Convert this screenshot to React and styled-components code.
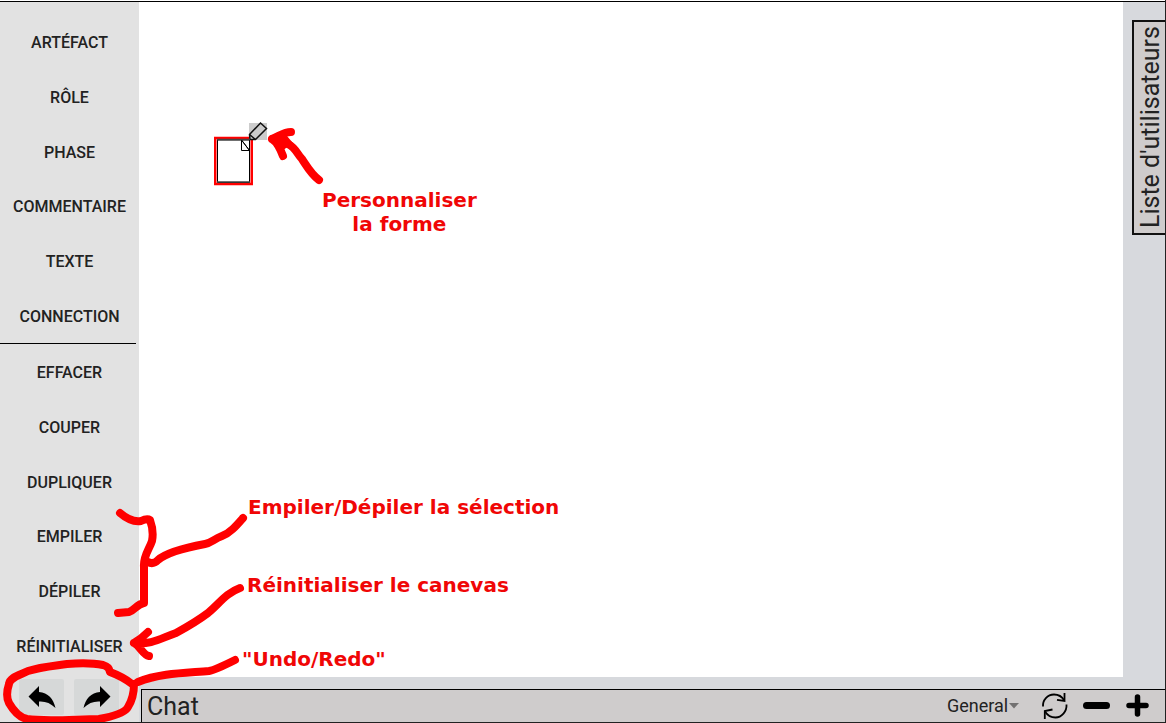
import React from "react";
import styled, { createGlobalStyle } from "styled-components";

const GlobalStyle = createGlobalStyle`
  *, *::before { box-sizing: border-box; }
  body { margin: 0; background: #fff; font-family: Roboto, sans-serif; color: #222; }
  button, select { font: inherit; color: inherit; border: 0; padding: 0; margin: 0; background: none; cursor: pointer; }
`;

const Screen = styled.div`
  position: relative;
  display: flex;
  min-height: 100vh;
  background: #d7d9dd;
  border: solid #222;
  border-width: 0 1px 1px 0;
  overflow: hidden;
  &::before {
    content: "";
    position: absolute;
    inset: 0 0 auto;
    height: 2px;
    background: #fff;
    border-bottom: 1px solid #000;
  }
`;

const Sidebar = styled.nav`
  flex: 0 0 139px;
  display: flex;
  flex-direction: column;
  padding-top: 15px;
  background: #e2e2e2;
`;

const ToolGroup = styled.div`
  flex: 1;
  display: flex;
  flex-direction: column;
`;

const ToolButton = styled.button`
  flex: 1;
  padding-top: 2px;
  font-size: 16px;
  font-weight: 500;
  line-height: 20px;
  text-transform: uppercase;
`;

const Separator = styled.hr`
  width: 136px;
  height: 1px;
  margin: 0 0 1px;
  border: 0;
  background: #000;
`;

const History = styled.div`
  display: flex;
  gap: 10px;
  padding: 6px 0 7px 19px;
`;

const HistoryButton = styled.button`
  display: grid;
  place-items: center;
  width: 45px;
  height: 36px;
  border-radius: 2px;
  background: #d6d8d8;
`;

const Main = styled.main`
  flex: 1;
  min-width: 0;
  display: flex;
  flex-direction: column;
`;

const Workspace = styled.div`
  flex: 1;
  display: flex;
  justify-content: space-between;
  padding-bottom: 12px;
`;

const Canvas = styled.section`
  flex: 1;
  background: #fff;
`;

const UserRail = styled.aside`
  flex: 0 0 42px;
  display: flex;
  justify-content: flex-end;
  align-items: flex-start;
  padding-top: 20px;
`;

const UserTab = styled.button`
  width: 33px;
  height: 215px;
  padding-right: 2px;
  border: 2px solid #111;
  border-left-width: 0;
  background: #cfcccc;
  font-size: 25px;
  line-height: 29px;
  writing-mode: vertical-rl;
  transform: rotate(180deg);
  white-space: nowrap;
`;

const ChatBar = styled.footer`
  display: flex;
  align-items: center;
  height: 33px;
  margin-left: 2px;
  padding: 0 14px 0 5px;
  border: solid #000;
  border-width: 1px 0 0 1px;
  background: #cfcccc;
`;

const ChatTitle = styled.h1`
  flex: 1;
  margin: 0;
  font-size: 25px;
  font-weight: 400;
  line-height: 32px;
  padding-top: 2px;
`;

const Channel = styled.div`
  display: flex;
  align-items: center;
  margin-right: 22px;
`;

const ChannelSelect = styled.select`
  appearance: none;
  width: 62px;
  font-size: 18px;
  line-height: 24px;
  outline: none;
`;

const ChatActions = styled.div`
  display: flex;
  align-items: center;
  gap: 14px;
`;

const IconButton = styled.button`
  display: grid;
  place-items: center;
  height: 30px;
`;

const Shape = styled.svg`
  position: absolute;
  left: 212px;
  top: 120px;
`;

const Marks = styled.svg`
  position: absolute;
  left: 0;
  top: 0;
  pointer-events: none;
  fill: none;
  stroke: #f00;
  stroke-width: 8;
  stroke-linecap: round;
  stroke-linejoin: round;
`;

const Note = styled.p`
  position: absolute;
  left: ${(p) => p.$x}px;
  top: ${(p) => p.$y}px;
  margin: 0;
  color: #f00606;
  font: bold 20px/24px "DejaVu Sans", sans-serif;
  text-align: center;
  white-space: pre-line;
`;

const shapeTools = ["Artéfact", "Rôle", "Phase", "Commentaire", "Texte", "Connection"];
const editTools = ["Effacer", "Couper", "Dupliquer", "Empiler", "Dépiler", "Réinitialiser"];

const notes = [
  { x: 322, y: 188, text: "Personnaliser\nla forme" },
  { x: 248, y: 495, text: "Empiler/Dépiler la sélection" },
  { x: 247, y: 573, text: "Réinitialiser le canevas" },
  { x: 242, y: 647, text: '"Undo/Redo"' },
];

const UndoIcon = ({ flip }) => (
  <svg width="28" height="24" viewBox="0 0 28 24" aria-hidden="true">
    <path
      transform={flip ? "translate(28 0) scale(-1 1)" : undefined}
      d="M0.500 11.500 11 1V7C20 7.500 25.500 14 27.500 23 22.500 18 17 16 11 16.500V22Z"
    />
  </svg>
);

export default function App() {
  return (
    <>
      <GlobalStyle />
      <Screen>
        <Sidebar aria-label="Outils">
          <ToolGroup>
            {shapeTools.map((name) => <ToolButton key={name}>{name}</ToolButton>)}
          </ToolGroup>
          <Separator />
          <ToolGroup>
            {editTools.map((name) => <ToolButton key={name}>{name}</ToolButton>)}
          </ToolGroup>
          <History>
            <HistoryButton aria-label="Undo"><UndoIcon /></HistoryButton>
            <HistoryButton aria-label="Redo"><UndoIcon flip /></HistoryButton>
          </History>
        </Sidebar>
        <Main>
          <Workspace>
            <Canvas aria-label="Canevas" />
            <UserRail>
              <UserTab>Liste d'utilisateurs</UserTab>
            </UserRail>
          </Workspace>
          <ChatBar>
            <ChatTitle>Chat</ChatTitle>
            <Channel>
              <ChannelSelect aria-label="Canal" defaultValue="General">
                <option>General</option>
              </ChannelSelect>
              <svg width="10" height="6" viewBox="0 0 10 6" aria-hidden="true">
                <path d="M0 0H10L5 5.500Z" fill="#737171" />
              </svg>
            </Channel>
            <ChatActions>
              <IconButton aria-label="Actualiser">
                <svg width="28" height="28" viewBox="0 0 28 28" fill="none" stroke="#000" strokeWidth="1.800" aria-hidden="true">
                  <path d="M2 14.500C1.500 8 6.500 2.500 13 2.500C17.500 2.500 21 4.500 23.200 8.500" />
                  <path d="M23.500 1V9L16 7.800" />
                  <path d="M25.500 12.500C26 19.500 20.500 25.500 14.500 25.500C10 25.500 6.500 23.500 4 19.500" />
                  <path d="M3.800 27V19L11.500 17.500" />
                </svg>
              </IconButton>
              <IconButton aria-label="Réduire">
                <svg width="27" height="24" viewBox="0 0 27 24" aria-hidden="true">
                  <rect y="8" width="27" height="7" rx="3.500" />
                </svg>
              </IconButton>
              <IconButton aria-label="Agrandir">
                <svg width="27" height="24" viewBox="0 0 27 24" aria-hidden="true">
                  <path d="M5 11.500H22M13.500 3V20" fill="none" stroke="#000" strokeWidth="5.500" strokeLinecap="round" />
                </svg>
              </IconButton>
            </ChatActions>
          </ChatBar>
        </Main>

        <Shape width="58" height="68" viewBox="0 0 58 68" fill="none" aria-hidden="true">
          <rect x="3.250" y="18" width="36.500" height="46" stroke="#f00" strokeWidth="2.500" />
          <path d="M5.500 20H30L37.500 31V62.500H5.500Z" fill="#fff" stroke="none" />
          <path d="M5.500 20H37.500V62.500H5.500ZM29.500 20V30.500H37.500Z" stroke="#000" fill="#fff" />
          <path d="M29.500 20 37.500 30.500" stroke="#000" />
          <path d="M5 19.500H38M5 62H38" stroke="#444" strokeWidth="1.500" />
          <rect x="37" y="3" width="18" height="17" fill="#ccc" />
          <path d="M37.500 14.500 48.500 3 54.500 8.500 43.500 19.500H38ZM37.500 14.500 43.500 19.500" stroke="#111" strokeWidth="1.500" />
        </Shape>
        <Marks width="600" height="723" viewBox="0 0 600 723" aria-hidden="true">
          <path d="M319 180C311 174 308 168 302 159C297 154 296 148 288 144C282 140 278 139 272 139M291 132C284 132 281 135 272 139M272 139C277 142 280 148 283 156" />
          <path d="M273 138 285 136 296 149 286 146 281 150Z" fill="#f00" strokeWidth="3" />
          <path d="M120 513C127 519 135 522 141 521Q147 518 150 520Q154 531 152 541C149 550 143 556 144 567V603C137 604 135 610 129 612L118 613" />
          <path d="M243 518C236 526 230 533 222 536C214 539 211 543 205 544C189 547 167 552 158 560Q153 565 148 562" />
          <path d="M240 588C226 593 219 604 208 613C196 622 187 627 176 633C161 638 152 645 134 643M148 632C144 636 139 640 134 643M134 643C140 646 143 655 149 656" />
          <path d="M235 660C225 665 215 670 209 671C187 673 160 673 138 682M132 684C127 680 118 675 110 672C109 669 109 667 103 665C93 663 80 663 67 664C53 666 40 667 28 671C20 675 10 677 9 684C7 690 6 697 9 703C13 710 18 717 27 719C48 722 77 719 99 719C110 717 125 713 128 707C133 699 134 692 134 684" />
        </Marks>
        {notes.map((n) => <Note key={n.text} $x={n.x} $y={n.y}>{n.text}</Note>)}
      </Screen>
    </>
  );
}
